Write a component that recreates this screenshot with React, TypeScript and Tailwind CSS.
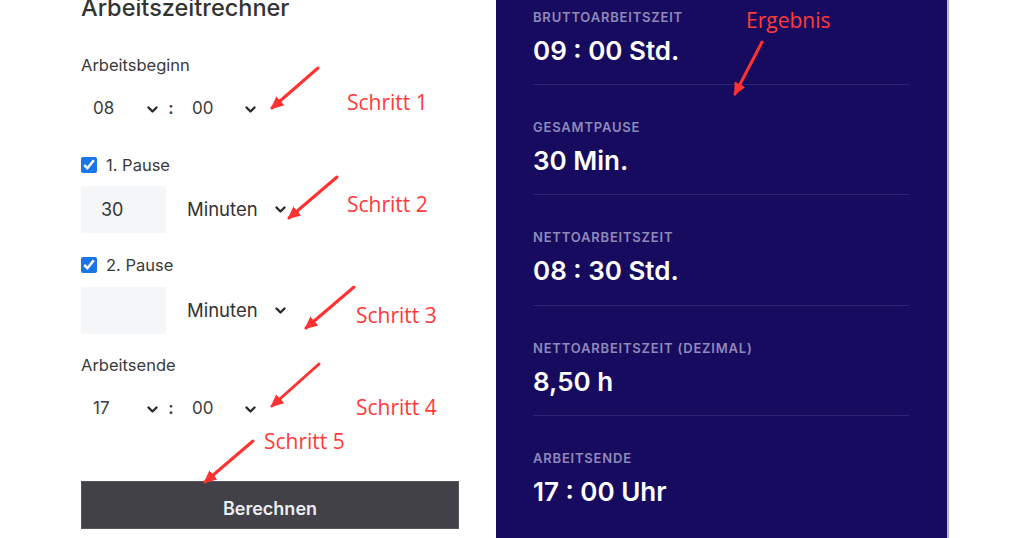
import React from "react";

const Chevron = () => (
  <svg width="11" height="7" viewBox="0 0 11 7" className="shrink-0">
    <polyline points="1.5,1.5 5.5,5.5 9.5,1.5" fill="none" stroke="#2b2b2b" strokeWidth="2.4" strokeLinecap="round" strokeLinejoin="round" />
  </svg>
);

const TimeRow = ({ h, m }: { h: string; m: string }) => (
  <div className="flex items-center h-[40px] text-[17px] text-[#3d3d3d]">
    <div className="flex items-center justify-between w-[82px] pl-[12px] pr-[5px]">
      <span>{h}</span>
      <Chevron />
    </div>
    <span className="w-[18px] text-center font-semibold -ml-[1px]">:</span>
    <div className="flex items-center justify-between w-[82px] pl-[12px] pr-[6px]">
      <span>{m}</span>
      <Chevron />
    </div>
  </div>
);

const PauseRow = ({ value }: { value: string }) => (
  <div className="flex items-center h-[47px]">
    <div className="w-[85px] h-[47px] bg-[#f5f6f8] flex items-center pl-[20px] text-[18px] text-[#333]">{value}</div>
    <div className="flex items-center ml-[21px] text-[18.5px] text-[#333]">
      <span>Minuten</span>
      <span className="ml-[17px]"><Chevron /></span>
    </div>
  </div>
);

const Check = ({ label }: { label: string }) => (
  <div className="flex items-center h-[20px] text-[16.5px] text-[#3a3a3a]">
    <input type="checkbox" defaultChecked className="w-[16px] h-[16px] m-0 accent-[#1a75e8]" />
    <span className="ml-[9px]">{label}</span>
  </div>
);

const Result = ({ label, value, cls }: { label: string; value: string; cls: string }) => (
  <div className={cls}>
    <div className="h-[16px] flex items-center text-[13px] font-semibold tracking-[0.8px] text-[#8f89b9]">{label}</div>
    <div className="h-[30px] mt-[9px] flex items-center text-[26px] font-semibold text-white">{value}</div>
  </div>
);

type Arrow = [number, number, number, number];
const arrows: Arrow[] = [
  [318, 68, 272, 108],
  [337, 177, 289, 218],
  [354, 287, 306, 328],
  [319, 364, 272, 406],
  [253, 441, 205, 482],
  [762, 42, 735, 94],
];

const notes = [
  { t: "Schritt 1", x: 347, y: 89 },
  { t: "Schritt 2", x: 347, y: 191 },
  { t: "Schritt 3", x: 356, y: 302 },
  { t: "Schritt 4", x: 356, y: 394 },
  { t: "Schritt 5", x: 264, y: 428 },
  { t: "Ergebnis", x: 746, y: 7 },
];

export default function App() {
  return (
    <div className="relative w-[1024px] h-[538px] overflow-hidden bg-white" style={{ fontFamily: "Inter, 'Noto Sans', sans-serif" }}>
      <div className="flex h-full pl-[81px]">
        <div className="w-[378px] flex flex-col">
          <div className="-mt-[6px] h-[28px] flex items-center text-[23.5px] font-medium text-[#333]">Arbeitszeitrechner</div>
          <div className="mt-[33px] h-[20px] flex items-center text-[16.5px] text-[#3a3a3a]">Arbeitsbeginn</div>
          <div className="mt-[14px]"><TimeRow h="08" m="00" /></div>
          <div className="mt-[26px]"><Check label="1. Pause" /></div>
          <div className="mt-[11px]"><PauseRow value="30" /></div>
          <div className="mt-[22px]"><Check label="2. Pause" /></div>
          <div className="mt-[12px]"><PauseRow value="" /></div>
          <div className="mt-[21px] h-[20px] flex items-center text-[16.5px] text-[#3a3a3a]">Arbeitsende</div>
          <div className="mt-[14px]"><TimeRow h="17" m="00" /></div>
          <button className="mt-[52px] h-[48px] w-full bg-[#414147] text-[#eceef3] text-[18px] font-semibold border border-[#55555b] pt-[6px]">Berechnen</button>
        </div>
        <div className="ml-[37px] w-[453px] h-full bg-[#170b5f] border-r-2 border-[#b9b3da] pl-[37px] pr-[38px]">
          <Result cls="pt-[10px] pb-[19px] border-b border-[#2e2474]" label="BRUTTOARBEITSZEIT" value="09 : 00 Std." />
          <Result cls="pt-[35px] pb-[19px] border-b border-[#2e2474]" label="GESAMTPAUSE" value="30 Min." />
          <Result cls="pt-[35px] pb-[20px] border-b border-[#2e2474]" label="NETTOARBEITSZEIT" value="08 : 30 Std." />
          <Result cls="pt-[35px] pb-[19px] border-b border-[#2e2474]" label="NETTOARBEITSZEIT (DEZIMAL)" value="8,50 h" />
          <Result cls="pt-[35px]" label="ARBEITSENDE" value="17 : 00 Uhr" />
        </div>
      </div>

      <svg className="absolute inset-0 pointer-events-none" width="1024" height="538">
        <defs>
          <marker id="ah" markerUnits="userSpaceOnUse" markerWidth="14" markerHeight="14" refX="11" refY="7" orient="auto">
            <polygon points="0,1 13,7 0,13" fill="#ff3131" />
          </marker>
        </defs>
        {arrows.map(([x1, y1, x2, y2], i) => (
          <line key={i} x1={x1} y1={y1} x2={x2} y2={y2} stroke="#ff3131" strokeWidth="3" strokeLinecap="round" markerEnd="url(#ah)" />
        ))}
      </svg>
      {notes.map((n) => (
        <div
          key={n.t}
          className="absolute text-[21px] leading-[26px] text-[#ff3a3a]"
          style={{ left: n.x, top: n.y, fontFamily: "'Open Sans', sans-serif" }}
        >
          {n.t}
        </div>
      ))}
    </div>
  );
}
